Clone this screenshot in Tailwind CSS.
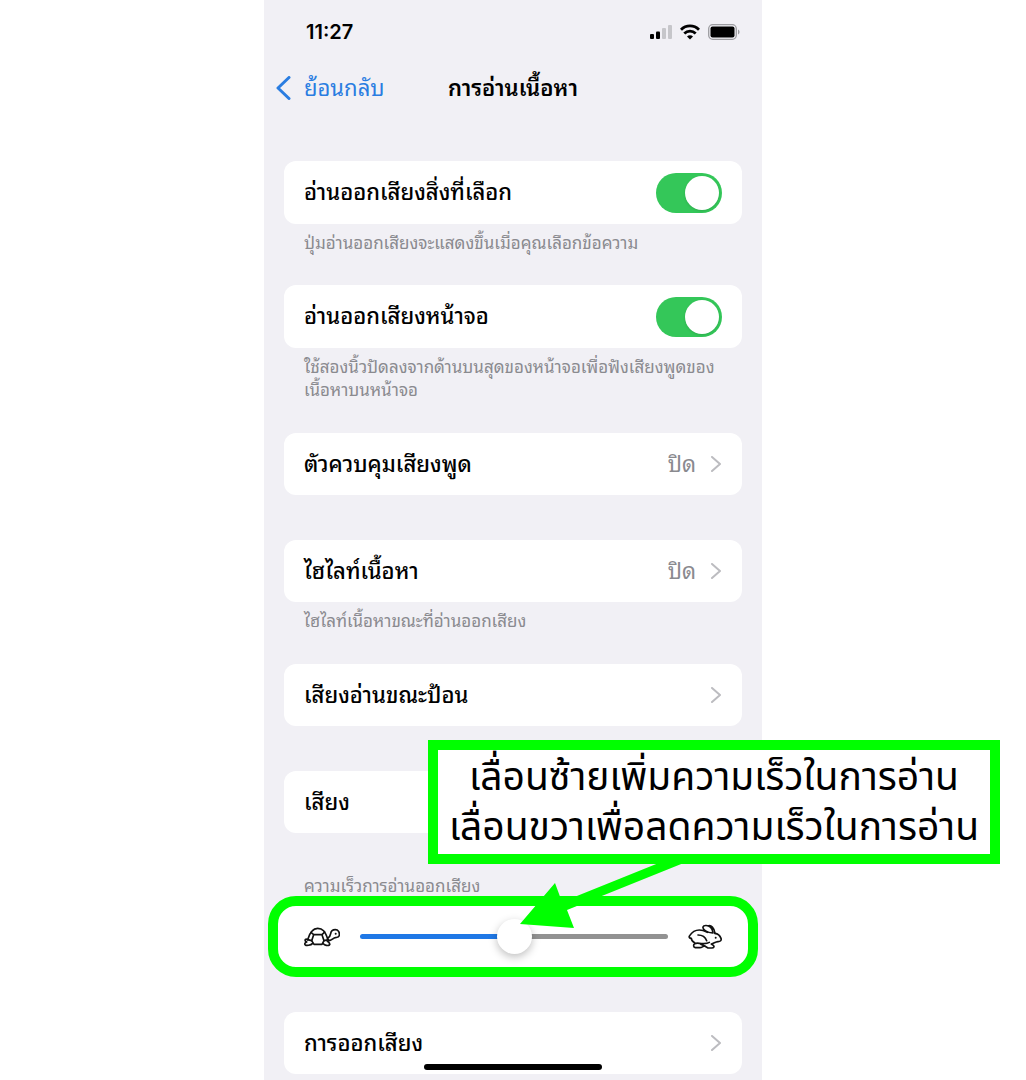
<!DOCTYPE html>
<html lang="th">
<head>
    <meta charset="UTF-8">
    <meta name="viewport" content="width=device-width, initial-scale=1.0">
    <title>การอ่านเนื้อหา</title>
    <script src="https://cdn.jsdelivr.net/npm/@tailwindcss/browser@4"></script>
</head>
<body class="min-h-screen bg-white font-['Inter','Noto_Sans_Thai_Looped','Noto_Sans_Thai','Noto_Sans',sans-serif] text-black overflow-x-hidden">
    <div class="relative mx-auto w-full max-w-[498px] min-h-screen bg-[#f1f0f5]">
        <!-- status bar -->
        <div class="flex items-center justify-between h-16 pl-[42px] pr-[22px]">
            <span class="text-xl font-semibold">11:27</span>
            <div class="flex items-center gap-2">
                <svg class="w-[22px] h-4" viewBox="0 0 22 16" aria-hidden="true">
                    <rect x="0" y="10" width="4" height="5" rx="1" />
                    <rect x="6" y="7.500" width="4" height="7.500" rx="1" />
                    <rect x="12" y="4" width="4" height="11" rx="1" fill="#c6c6ca" />
                    <rect x="18" y="1" width="4" height="14" rx="1" fill="#c6c6ca" />
                </svg>
                <svg class="w-5 h-4" viewBox="0 0 20 16" fill="none" stroke="#000" stroke-width="2.800" aria-hidden="true">
                    <path d="M1 5.700C6 .7 14 .7 19 5.700" />
                    <path d="M4.300 9.500C7.500 6.400 12.500 6.400 15.700 9.500" />
                    <path d="M10 15.500 7 12.400C8.700 10.900 11.300 10.900 13 12.400Z" fill="#000" stroke="none" />
                </svg>
                <svg class="w-8 h-4" viewBox="0 0 32 16" aria-hidden="true">
                    <rect x=".7" y=".7" width="27.600" height="14.600" rx="4" fill="none" stroke="#9c9ca0" stroke-width="1.300" />
                    <rect x="2.500" y="2.500" width="24" height="11" rx="2" />
                    <path d="M30 5.500c2 .8 2 4.200 0 5z" fill="#9c9ca0" />
                </svg>
            </div>
        </div>

        <!-- nav bar -->
        <header class="grid grid-cols-[1fr_auto_1fr] items-center h-12 px-3">
            <a href="#" class="flex items-center gap-3 text-[22px] text-[#2a7de1]">
                <svg class="w-4 h-6" viewBox="0 0 16 24" fill="none" stroke="currentColor" stroke-width="3" stroke-linecap="round" stroke-linejoin="round" aria-hidden="true">
                    <path d="M13 1.500 2 12 13 22.500" />
                </svg>
                ย้อนกลับ
            </a>
            <h1 class="text-[22px] font-semibold">การอ่านเนื้อหา</h1>
        </header>

        <main class="px-5 pt-[49px] text-[22px]">
            <section class="h-[124px]">
                <label class="flex items-center justify-between h-[63px] px-5 rounded-xl bg-white font-medium">
                    อ่านออกเสียงสิ่งที่เลือก
                    <input type="checkbox" role="switch" checked class="appearance-none flex items-center justify-end w-[66px] h-10 p-[3px] rounded-full bg-[#34c759] before:w-[34px] before:h-[34px] before:rounded-full before:bg-white before:shadow">
                </label>
                <p class="px-5 pt-2 text-[17px] leading-[23px] text-[#8a8a8f]">ปุ่มอ่านออกเสียงจะแสดงขึ้นเมื่อคุณเลือกข้อความ</p>
            </section>

            <section class="h-[148px]">
                <label class="flex items-center justify-between h-[63px] px-5 rounded-xl bg-white font-medium">
                    อ่านออกเสียงหน้าจอ
                    <input type="checkbox" role="switch" checked class="appearance-none flex items-center justify-end w-[66px] h-10 p-[3px] rounded-full bg-[#34c759] before:w-[34px] before:h-[34px] before:rounded-full before:bg-white before:shadow">
                </label>
                <p class="px-5 pt-2 text-[17px] leading-[23px] text-[#8a8a8f]">ใช้สองนิ้วปัดลงจากด้านบนสุดของหน้าจอเพื่อฟังเสียงพูดของ<br>เนื้อหาบนหน้าจอ</p>
            </section>

            <section class="h-[107px]">
                <a href="#" class="flex items-center h-[62px] px-5 rounded-xl bg-white font-medium">
                    <span class="grow">ตัวควบคุมเสียงพูด</span>
                    <span class="mr-[14px] font-normal text-[#8a8a8f]">ปิด</span>
                    <svg class="w-3 h-4" viewBox="0 0 12 16" fill="none" stroke="#bcbcc0" stroke-width="2" stroke-linecap="round" stroke-linejoin="round" aria-hidden="true"><path d="M2 1l8 7-8 7" /></svg>
                </a>
            </section>

            <section class="h-[124px]">
                <a href="#" class="flex items-center h-[62px] px-5 rounded-xl bg-white font-medium">
                    <span class="grow">ไฮไลท์เนื้อหา</span>
                    <span class="mr-[14px] font-normal text-[#8a8a8f]">ปิด</span>
                    <svg class="w-3 h-4" viewBox="0 0 12 16" fill="none" stroke="#bcbcc0" stroke-width="2" stroke-linecap="round" stroke-linejoin="round" aria-hidden="true"><path d="M2 1l8 7-8 7" /></svg>
                </a>
                <p class="px-5 pt-2 text-[17px] leading-[23px] text-[#8a8a8f]">ไฮไลท์เนื้อหาขณะที่อ่านออกเสียง</p>
            </section>

            <section class="h-[107px]">
                <a href="#" class="flex items-center h-[62px] px-5 rounded-xl bg-white font-medium">
                    <span class="grow">เสียงอ่านขณะป้อน</span>
                    <svg class="w-3 h-4" viewBox="0 0 12 16" fill="none" stroke="#bcbcc0" stroke-width="2" stroke-linecap="round" stroke-linejoin="round" aria-hidden="true"><path d="M2 1l8 7-8 7" /></svg>
                </a>
            </section>

            <section class="h-[104px]">
                <a href="#" class="flex items-center h-[62px] px-5 rounded-xl bg-white font-medium">
                    <span class="grow">เสียง</span>
                    <svg class="w-3 h-4" viewBox="0 0 12 16" fill="none" stroke="#bcbcc0" stroke-width="2" stroke-linecap="round" stroke-linejoin="round" aria-hidden="true"><path d="M2 1l8 7-8 7" /></svg>
                </a>
            </section>

            <section class="h-[137px]">
                <label for="rate" class="block h-[31px] px-5 text-[17px] leading-[23px] text-[#8a8a8f]">ความเร็วการอ่านออกเสียง</label>
                <div class="relative flex items-center justify-between h-[61px] px-5">
                    <div class="absolute -inset-x-4 -inset-y-[10px] rounded-[28px] border-10 border-[#00ff00] bg-white"></div>
                    <svg class="relative w-9 h-5" viewBox="0 0 108 60" fill="none" stroke="#111" stroke-width="5" stroke-linecap="round" stroke-linejoin="round" aria-hidden="true">
                        <path d="M11 38C18 14 26 4 41 4S63 12 72 38" />
                        <path d="M29 23H54L60 41 54 52H30L23 41ZM29 23 21 16M54 23l8-8" />
                        <path d="M11 38 23 41M60 41 74 38" />
                        <path d="M11 38C5 34 2 38 4 42l4 3C2 47 1 52 4 54s16 2 22-5" />
                        <path d="M58 50c4 5 14 7 18 4s-1-8-6-11" />
                        <path d="M71 34c5-3 8-7 9-14C81 12 87 8 94 8c9 0 13 8 12 17-1 7-7 6-12 7-7 1-9 8-22 10" />
                        <circle cx="95" cy="20" r="3" fill="#111" stroke="none" />
                    </svg>
                    <input id="rate" type="range" min="0" max="100" value="50" class="relative appearance-none w-[308px] h-[5px] rounded-full bg-linear-to-r from-[#1f78e6] from-50% to-[#929292] to-50% [&::-webkit-slider-thumb]:appearance-none [&::-webkit-slider-thumb]:w-[35px] [&::-webkit-slider-thumb]:h-[35px] [&::-webkit-slider-thumb]:rounded-full [&::-webkit-slider-thumb]:bg-white [&::-webkit-slider-thumb]:shadow-[0_3px_9px_rgba(0,0,0,0.25)]">
                    <svg class="relative w-[34px] h-[26px]" viewBox="0 0 102 78" fill="none" stroke="#111" stroke-width="5" stroke-linecap="round" stroke-linejoin="round" aria-hidden="true">
                        <path d="M20 56C13 53 10 48 10 43 4 43 2 39 5 35 12 24 20 18 34 18c10 0 16 3 24 7" />
                        <path d="M74 27C58 26 43 17 45 9c2-7 16-5 22 0 5 5 7 11 8 18M60 6c9-4 19 5 21 22" />
                        <path d="M81 28c9 1 15 7 18 15 2 7-2 9-9 10-8 1-12 5-20 7l6 4c4 4 1 8-4 8H60L50 66" />
                        <path d="M30 33c12 0 22 6 26 17M64 55c-8 5-16 3-24 4M40 59c-7-2-16-2-20 0-5 3-4 11 2 12h14c6 0 8-4 14-5L38 61" />
                        <circle cx="83" cy="41" r="3" fill="#111" stroke="none" />
                    </svg>

                    <!-- callout and its arrow -->
                    <svg class="absolute left-[230px] bottom-[35px] w-[200px] h-[80px]" viewBox="0 0 200 80" fill="#00ff00" aria-hidden="true">
                        <path d="M6 72 41 31 48 50 172 0H197L53 58 60 76Z" />
                    </svg>
                    <div class="absolute left-36 bottom-[103px] flex items-center justify-center w-[572px] h-[124px] pt-1 border-10 border-[#00ff00] bg-white">
                        <p class="text-[39px] leading-[50px] text-center whitespace-nowrap font-['Noto_Sans_Thai','Noto_Sans',sans-serif]">เลื่อนซ้ายเพิ่มความเร็วในการอ่าน<br>เลื่อนขวาเพื่อลดความเร็วในการอ่าน</p>
                    </div>
                </div>
            </section>

            <section class="h-[68px]">
                <a href="#" class="flex items-center h-[62px] px-5 rounded-xl bg-white font-medium">
                    <span class="grow">การออกเสียง</span>
                    <svg class="w-3 h-4" viewBox="0 0 12 16" fill="none" stroke="#bcbcc0" stroke-width="2" stroke-linecap="round" stroke-linejoin="round" aria-hidden="true"><path d="M2 1l8 7-8 7" /></svg>
                </a>
            </section>
        </main>

        <!-- home indicator -->
        <div class="absolute bottom-[10px] left-1/2 -translate-x-1/2 w-[178px] h-[6px] rounded-full bg-black"></div>
    </div>
</body>
</html>
